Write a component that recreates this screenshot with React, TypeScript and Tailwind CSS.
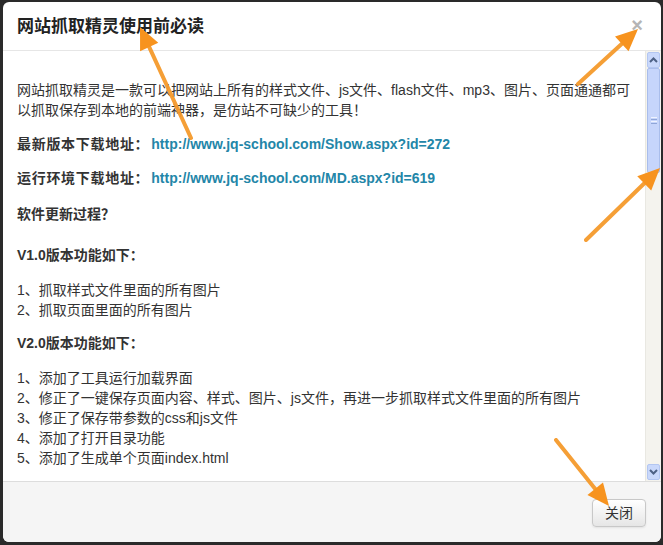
import React from 'react';

const FONT = '"Liberation Sans", Arial, "Noto Sans CJK SC", sans-serif';

// orange annotation arrows: tail -> tip
const ARROWS = [
  { from: [191, 138], to: [140, 27] },
  { from: [578, 84], to: [638, 29] },
  { from: [586, 240], to: [660, 168] },
  { from: [556, 440], to: [609, 506] },
];

function Arrow({ from, to }: { from: number[]; to: number[] }) {
  const [x1, y1] = from;
  const [x2, y2] = to;
  const dx = x2 - x1;
  const dy = y2 - y1;
  const len = Math.hypot(dx, dy);
  const ux = dx / len;
  const uy = dy / len;
  const hl = 22;
  const hw = 10;
  const bx = x2 - ux * hl;
  const by = y2 - uy * hl;
  const pts = `${x2},${y2} ${bx - uy * hw},${by + ux * hw} ${bx + uy * hw},${by - ux * hw}`;
  return (
    <g>
      <line x1={x1} y1={y1} x2={bx + ux * 2} y2={by + uy * 2} stroke="#f59a2c" strokeWidth={4} strokeLinecap="round" opacity={0.95} />
      <polygon points={pts} fill="#f7931e" />
    </g>
  );
}

function Scrollbar() {
  return (
    <div className="w-[16px] flex flex-col bg-[#f4f3ee] border-l border-[#e9e8e2]">
      <div className="h-[16px] mt-[1px] mx-[1px] rounded-[2px] bg-[#c9d8fb] border border-[#b3c6f1] flex items-center justify-center">
        <svg width="9" height="6" viewBox="0 0 9 6">
          <path d="M1 5 L4.5 1.5 L8 5" stroke="#4d6185" strokeWidth="2" fill="none" />
        </svg>
      </div>
      <div className="h-[105px] mx-[1px] rounded-[2px] bg-[#c6d5fb] border border-[#a9bdeb] flex items-center justify-center">
        <div className="flex flex-col gap-[1px]">
          <div className="w-[6px] h-[1px] bg-[#eef3ff]" />
          <div className="w-[6px] h-[1px] bg-[#8fa6d8]" />
          <div className="w-[6px] h-[1px] bg-[#eef3ff]" />
          <div className="w-[6px] h-[1px] bg-[#8fa6d8]" />
        </div>
      </div>
      <div className="flex-1" />
      <div className="h-[16px] mb-[1px] mx-[1px] rounded-[2px] bg-[#c9d8fb] border border-[#b3c6f1] flex items-center justify-center">
        <svg width="9" height="6" viewBox="0 0 9 6">
          <path d="M1 1 L4.5 4.5 L8 1" stroke="#4d6185" strokeWidth="2" fill="none" />
        </svg>
      </div>
    </div>
  );
}

export default function App() {
  return (
    <div className="relative w-[663px] h-[545px] bg-[#2a2a2a] pt-[2px] pl-[3px] pr-[2px] pb-[3px] overflow-hidden" style={{ fontFamily: FONT }}>
      <div className="w-full h-full bg-white rounded-[6px] flex flex-col overflow-hidden text-[#333]">
        {/* header */}
        <div className="h-[49px] shrink-0 border-b border-[#e6e6e6] flex items-center justify-between pl-[14px] pr-[18px]">
          <h3 className="text-[17px] font-bold text-[#222] leading-none">网站抓取精灵使用前必读</h3>
          <span className="text-[20px] font-bold text-[#b5b5b5] leading-none mb-[2px]">×</span>
        </div>
        {/* body */}
        <div className="h-[430px] shrink-0 flex">
          <div className="flex-1 overflow-hidden pl-[14px] pt-[29px] text-[14px] leading-[20px]">
            <p className="whitespace-nowrap">网站抓取精灵是一款可以把网站上所有的样式文件、js文件、flash文件、mp3、图片、页面通通都可</p>
            <p className="whitespace-nowrap">以抓取保存到本地的前端神器，是仿站不可缺少的工具！</p>
            <p className="mt-[14px] font-bold whitespace-nowrap tracking-[0.7px]">
              最新版本下载地址：
              <span className="ml-[2px] text-[14px] tracking-normal text-[#2386a8]">http://www.jq-school.com/Show.aspx?id=272</span>
            </p>
            <p className="mt-[14px] font-bold whitespace-nowrap tracking-[0.7px]">
              运行环境下载地址：
              <span className="ml-[2px] text-[14px] tracking-normal text-[#2386a8]">http://www.jq-school.com/MD.aspx?id=619</span>
            </p>
            <p className="mt-[16px] font-bold">软件更新过程？</p>
            <p className="mt-[21px] font-bold">V1.0版本功能如下：</p>
            <div className="mt-[15px]">
              <p>1、抓取样式文件里面的所有图片</p>
              <p>2、抓取页面里面的所有图片</p>
            </div>
            <p className="mt-[13px] font-bold">V2.0版本功能如下：</p>
            <div className="mt-[15px]">
              <p>1、添加了工具运行加载界面</p>
              <p className="whitespace-nowrap">2、修正了一键保存页面内容、样式、图片、js文件，再进一步抓取样式文件里面的所有图片</p>
              <p>3、修正了保存带参数的css和js文件</p>
              <p>4、添加了打开目录功能</p>
              <p>5、添加了生成单个页面index.html</p>
            </div>
          </div>
          <Scrollbar />
        </div>
        {/* footer */}
        <div className="flex-1 bg-[#f5f5f5] border-t border-[#dddddd] flex items-start justify-end pr-[15px] pt-[17px]">
          <button className="w-[54px] h-[28px] rounded-[4px] border border-[#c8c8c8] bg-gradient-to-b from-white to-[#e6e6e6] text-[14px] text-[#333] shadow-[0_1px_2px_rgba(0,0,0,0.08)]">
            关闭
          </button>
        </div>
      </div>
      <svg className="absolute inset-0 pointer-events-none" width="663" height="545" viewBox="0 0 663 545">
        {ARROWS.map((a, i) => (
          <Arrow key={i} from={a.from} to={a.to} />
        ))}
      </svg>
    </div>
  );
}
